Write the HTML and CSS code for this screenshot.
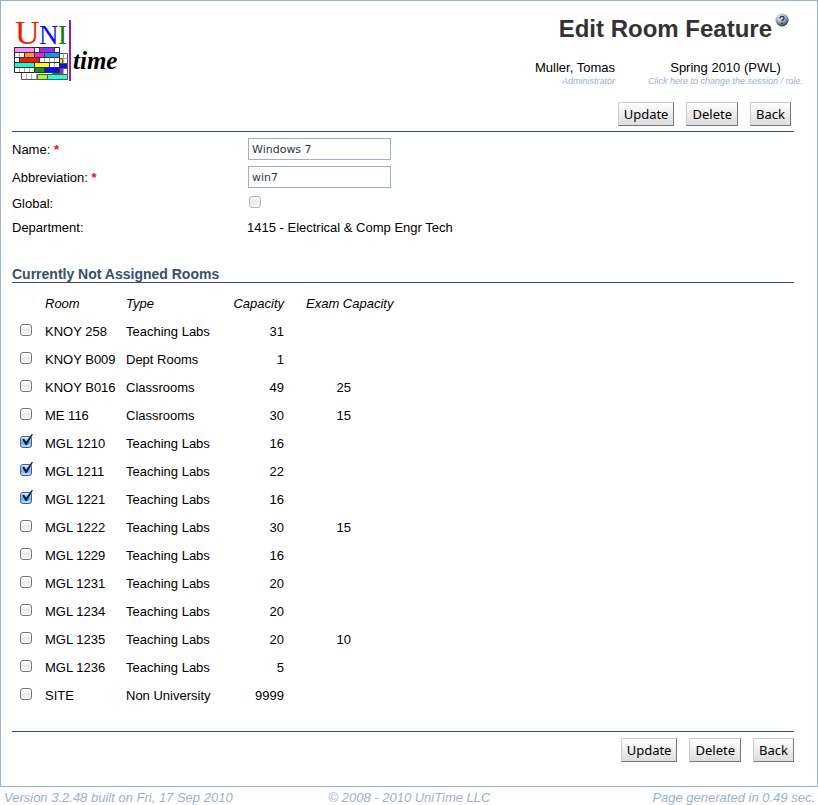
FILE: index.html
```html
<!DOCTYPE html>
<html lang="en">
<head>
<meta charset="utf-8">
<title>Edit Room Feature</title>
<link rel="stylesheet" href="styles.css">
</head>
<body>
<form class="page">
  <header class="top">
    <svg class="logo" viewBox="0 -10 108 74" role="img" aria-label="UniTime">
      <g class="logo-serif">
        <text x="1" y="25" font-size="34" fill="#f21a00">U</text>
        <text x="25" y="25" font-size="27" fill="#0a10f5">N</text>
        <text x="44" y="25" font-size="27" fill="#0b7a0b">I</text>
      </g>
      <g stroke="#555" stroke-width="1">
        <path fill="#fff" d="M7.5 34.500H53.500V60.500H7.500Z"/>
        <path fill="none" stroke="#aaa" d="M12.500 55V60M17.500 55V60M22.500 55V60M27.500 55V60M46 39.500H53M46 49.500H53M49.500 35V60"/>
        <path fill="#f4e30c" d="M45.500 39.500h3v5h-3z"/>
        <path fill="#0a12f5" d="M45.500 44.500h8v5h-8z"/>
        <path fill="#d414c8" d="M38.500 49.500h10v5h-10z"/>
        <path fill="#9f3" d="M23.500 55.500h10v5h-10z"/>
        <path fill="#2fd" d="M33.500 55.500h20v5h-20z"/>
      </g>
      <path fill="#fff" stroke="#222" d="M.5 28.500H45.500V53.500H.500Z"/>
      <path fill="none" stroke="#aaa" d="M5.500 34V43M10.500 34V38M25.500 29V33M40.500 29V33M30.500 39V43M35.500 39V43M40.500 39V53M5.500 49V53M10.500 49V53M15.500 49V53"/>
      <g stroke="#333">
        <path fill="none" d="M.5 33.500H45.500M.5 38.500H45.500M.5 43.500H45.500M.5 48.500H45.500"/>
        <path fill="#f990f5" d="M.5 28.500h20v5h-20z"/>
        <path fill="#9a2cf5" d="M25.500 28.500h15v5h-15z"/>
        <path fill="#ff962c" d="M10.500 33.500h10v5h-10z"/>
        <path fill="#f51ef0" d="M20.500 33.500h10v5h-10z"/>
        <path fill="#0f96f5" d="M30.500 33.500h15v5h-15z"/>
        <path fill="#f91800" d="M5.500 38.500h20v5h-20z"/>
        <path fill="#25f5cf" d="M.5 43.500h20v5h-20z"/>
        <path fill="#fffb18" d="M20.500 43.500h15v5h-15z"/>
        <path fill="#159610" d="M20.500 48.500h10v5h-10z"/>
        <path fill="#0a12f5" d="M30.500 48.500h15v5h-15z"/>
      </g>
      <path fill="#9420a8" d="M55 1h2v61h-2z"/>
      <text class="logo-script" x="59" y="50">time</text>
    </svg>
    <div class="heading">
      <h1 class="title">Edit Room Feature<svg class="help" viewBox="0 0 14 14" role="img" aria-label="Help">
        <defs><radialGradient id="ball" cx=".4" cy=".3" r=".7"><stop offset="0" stop-color="#f4f7fb"/><stop offset=".5" stop-color="#a8b4c5"/><stop offset="1" stop-color="#2c3a50"/></radialGradient></defs>
        <circle cx="7" cy="7" r="6.500" fill="url(#ball)"/>
        <path d="M5 5.500C5 2.700 9 2.700 9 5.200C9 6.700 7 6.500 7 8.300" fill="none" stroke="#26344c" stroke-width="1.400"/>
        <circle cx="7" cy="10.300" r=".9" fill="#26344c"/>
      </svg></h1>
      <div class="session">
        <div class="who"><span>Muller, Tomas</span><small class="hint">Administrator</small></div>
        <div class="term"><span>Spring 2010 (PWL)</span><a class="hint" href="#">Click here to change the session / role.</a></div>
      </div>
    </div>
  </header>
  <main class="content">
    <div class="buttons buttons-top">
      <button type="button">Update</button>
      <button type="button">Delete</button>
      <button type="button">Back</button>
    </div>
    <div class="fields">
      <label for="name">Name: <b class="required">*</b></label>
      <div><input class="text" id="name" type="text" value="Windows 7"></div>
      <label for="abbv">Abbreviation: <b class="required">*</b></label>
      <div><input class="text" id="abbv" type="text" value="win7"></div>
      <label for="global">Global:</label>
      <div><input class="check muted" id="global" type="checkbox"></div>
      <span>Department:</span>
      <span>1415 - Electrical &amp; Comp Engr Tech</span>
    </div>
    <h2 class="section">Currently Not Assigned Rooms</h2>
    <table class="rooms">
      <thead><tr><th class="pick"></th><th class="room">Room</th><th class="type">Type</th><th class="cap">Capacity</th><th class="exam">Exam Capacity</th></tr></thead>
      <tbody>
        <tr><td><input class="check" type="checkbox" aria-label="KNOY 258"></td><td>KNOY 258</td><td>Teaching Labs</td><td>31</td><td></td></tr>
        <tr><td><input class="check" type="checkbox" aria-label="KNOY B009"></td><td>KNOY B009</td><td>Dept Rooms</td><td>1</td><td></td></tr>
        <tr><td><input class="check" type="checkbox" aria-label="KNOY B016"></td><td>KNOY B016</td><td>Classrooms</td><td>49</td><td>25</td></tr>
        <tr><td><input class="check" type="checkbox" aria-label="ME 116"></td><td>ME 116</td><td>Classrooms</td><td>30</td><td>15</td></tr>
        <tr><td><input class="check" type="checkbox" checked aria-label="MGL 1210"></td><td>MGL 1210</td><td>Teaching Labs</td><td>16</td><td></td></tr>
        <tr><td><input class="check" type="checkbox" checked aria-label="MGL 1211"></td><td>MGL 1211</td><td>Teaching Labs</td><td>22</td><td></td></tr>
        <tr><td><input class="check" type="checkbox" checked aria-label="MGL 1221"></td><td>MGL 1221</td><td>Teaching Labs</td><td>16</td><td></td></tr>
        <tr><td><input class="check" type="checkbox" aria-label="MGL 1222"></td><td>MGL 1222</td><td>Teaching Labs</td><td>30</td><td>15</td></tr>
        <tr><td><input class="check" type="checkbox" aria-label="MGL 1229"></td><td>MGL 1229</td><td>Teaching Labs</td><td>16</td><td></td></tr>
        <tr><td><input class="check" type="checkbox" aria-label="MGL 1231"></td><td>MGL 1231</td><td>Teaching Labs</td><td>20</td><td></td></tr>
        <tr><td><input class="check" type="checkbox" aria-label="MGL 1234"></td><td>MGL 1234</td><td>Teaching Labs</td><td>20</td><td></td></tr>
        <tr><td><input class="check" type="checkbox" aria-label="MGL 1235"></td><td>MGL 1235</td><td>Teaching Labs</td><td>20</td><td>10</td></tr>
        <tr><td><input class="check" type="checkbox" aria-label="MGL 1236"></td><td>MGL 1236</td><td>Teaching Labs</td><td>5</td><td></td></tr>
        <tr><td><input class="check" type="checkbox" aria-label="SITE"></td><td>SITE</td><td>Non University</td><td>9999</td><td></td></tr>
      </tbody>
    </table>
    <div class="buttons buttons-bottom">
      <button type="button">Update</button>
      <button type="button">Delete</button>
      <button type="button">Back</button>
    </div>
  </main>
</form>
<footer class="footer"><span>Version 3.2.48 built on Fri, 17 Sep 2010</span><span>© 2008 - 2010 UniTime LLC</span><span>Page generated in 0.49 sec.</span></footer>
</body>
</html>
```
FILE: styles.css
```css
* { box-sizing: border-box; }
body {
  margin: 0;
  background: #fff;
  color: #000;
  font: 13px/16px "Liberation Sans", Arial, sans-serif;
}
.page { border: 1px solid #9cb0d0; padding-bottom: 24px; }
.top { display: flex; justify-content: space-between; height: 100px; padding: 0 10px 0 13px; }
.logo { width: 108px; height: 74px; margin-top: 8px; }
.logo-serif { font-family: "Liberation Serif", serif; }
.logo-script { font: italic bold 25px "Liberation Serif", cursive; }
.heading { display: flex; flex-direction: column; }
.title {
  display: flex;
  align-self: flex-end;
  gap: 3px;
  margin: 12px 18px 0 0;
  color: #333;
  font-size: 24px;
  line-height: 32px;
}
.help { width: 14px; height: 14px; }
.session { display: flex; justify-content: flex-end; gap: 29px; margin-top: 15px; }
.who, .term { display: flex; flex-direction: column; }
.who { align-items: flex-end; }
.term { align-items: center; min-width: 163px; }
.hint { color: #9cb0d0; font-size: 9px; font-style: italic; line-height: 10px; text-decoration: none; }
.content { padding: 0 23px 0 11px; }
.buttons { display: flex; justify-content: flex-end; gap: 12px; }
.buttons-top { padding: 1px 3px 5px 0; border-bottom: 1px solid #34506e; }
.buttons-bottom { margin-top: 22px; padding-top: 6px; border-top: 1px solid #34506e; }
button {
  min-width: 41px;
  height: 24px;
  padding: 0 5px;
  border: 1px solid;
  border-color: #ccc #777 #777 #ccc;
  border-radius: 0;
  background: linear-gradient(#fff, #ddd);
  color: #000;
  font: 13px/20px "Noto Sans", sans-serif;
}
.fields {
  display: grid;
  grid-template-columns: 235px 1fr;
  grid-template-rows: 28px 28px 24px 24px;
  align-items: center;
  margin-top: 3px;
}
.fields > div { display: flex; padding-left: 1px; }
.fields > label, .fields > span { padding-top: 2px; }
.required { color: #f20d00; }
.text {
  width: 143px;
  height: 22px;
  padding: 0 3px;
  border: 1px solid #9cb0d0;
  background: #fff;
  color: #333;
  font: 11px "DejaVu Sans", Verdana, sans-serif;
}
.check {
  display: block;
  position: relative;
  width: 12px;
  height: 12px;
  margin: 0;
  border: 1px solid #777;
  border-radius: 3px;
  background: linear-gradient(#fff, #e8e8e8 50%, #fafafa);
  appearance: none;
}
.muted { margin: 0 0 2px 1px; border-color: #b5b5b5; }
.check:checked { border-color: #3f5f9a; background: linear-gradient(#dcecfb, #6fb0ee 60%, #b8e4ff); }
.check:checked::after {
  content: "";
  position: absolute;
  left: 1px;
  top: -3px;
  width: 11px;
  height: 11px;
  background: #14182c;
  clip-path: polygon(2% 50%, 18% 42%, 38% 70%, 88% 0, 100% 3%, 44% 100%, 32% 100%);
}
.section {
  margin: 26px 0 6px;
  padding-top: 1px;
  border-bottom: 1px solid #34506e;
  color: #34506e;
  font-size: 14px;
  line-height: 16px;
}
.rooms { table-layout: fixed; width: 390px; border-collapse: collapse; }
.rooms th { font-style: italic; font-weight: normal; text-align: left; }
.rooms th, .rooms td { height: 28px; padding: 2px 0 0; white-space: nowrap; }
.pick { width: 33px; }
.room { width: 81px; }
.type { width: 96px; }
.cap { width: 62px; }
.rooms td:first-child { padding: 0 0 2px 8px; }
.rooms th:nth-child(4), .rooms td:nth-child(4) { text-align: right; }
.rooms th:nth-child(5) { padding-left: 22px; }
.rooms td:nth-child(5) { padding-right: 51px; text-align: right; }
.footer {
  display: grid;
  grid-template-columns: 1fr auto 1fr;
  padding: 3px 3px 0 4px;
  color: #9cb0d0;
  font-style: italic;
}
.footer span:last-child { text-align: right; }
```
